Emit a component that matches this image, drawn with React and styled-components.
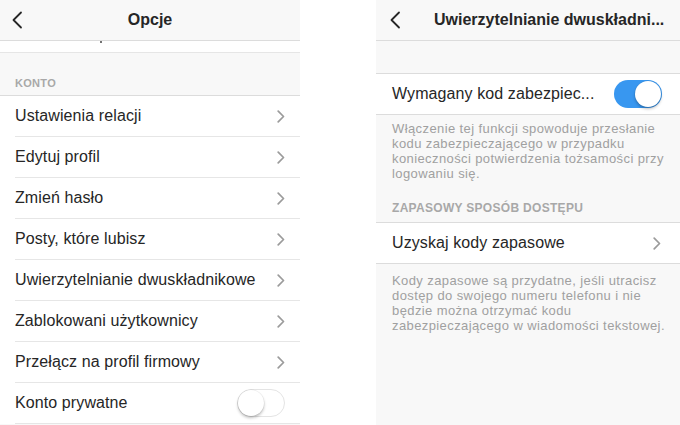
import React from "react";
import styled, { createGlobalStyle } from "styled-components";

const Global = createGlobalStyle`
  html, body { margin: 0; padding: 0; background: #fff; }
  body { font-family: "Liberation Sans", Arial, sans-serif; color: #262626; -webkit-font-smoothing: antialiased; }
`;

const Page = styled.div`
  display: flex;
  width: 680px;
  height: 425px;
  overflow: hidden;
  background: #fff;
`;

const Phone = styled.div`
  width: ${(p) => p.$w}px;
  margin-left: ${(p) => p.$ml || 0}px;
  height: 425px;
  background: #f8f8f8;
  display: flex;
  flex-direction: column;
  overflow: hidden;
`;

const Header = styled.div`
  height: 40px;
  flex: none;
  background: #f8f8f8;
  border-bottom: 1px solid #dcdcdc;
  display: flex;
  align-items: center;
  position: relative;
`;

const Back = styled.div`
  position: absolute;
  left: ${(p) => p.$l}px;
  top: 11px;
  width: 12px;
  height: 18px;
  display: flex;
`;

const Title = styled.div`
  flex: 1;
  text-align: ${(p) => (p.$left ? "left" : "center")};
  padding-left: ${(p) => p.$pl || 0}px;
  font-size: 16px;
  font-weight: 600;
  color: #262626;
  white-space: nowrap;
`;

const PartialRow = styled.div`
  height: 11px;
  flex: none;
  background: #fff;
  border-bottom: 1px solid #e6e6e6;
  position: relative;
`;

const Tick = styled.span`
  position: absolute;
  left: 100px;
  top: 0;
  width: 2px;
  height: 2px;
  background: #444;
  border-radius: 1px;
`;

const Gap = styled.div`
  height: ${(p) => p.$h}px;
  flex: none;
  background: #f8f8f8;
`;

const SectionLabel = styled.div`
  height: ${(p) => p.$h}px;
  flex: none;
  box-sizing: border-box;
  display: flex;
  align-items: flex-end;
  padding: 0 0 ${(p) => p.$pb}px ${(p) => p.$pl}px;
  font-size: ${(p) => p.$fs}px;
  font-weight: 700;
  letter-spacing: 0.3px;
  color: #a8a8a8;
  border-bottom: 1px solid #dcdcdc;
`;

const List = styled.div`
  background: #fff;
  flex: none;
  border-top: ${(p) => (p.$top ? "1px solid #dcdcdc" : "none")};
  border-bottom: ${(p) => (p.$bottom ? "1px solid #dcdcdc" : "none")};
`;

const Row = styled.div`
  height: 40px;
  display: flex;
  align-items: center;
  margin-left: ${(p) => p.$inset}px;
  padding-left: ${(p) => p.$pad}px;
  padding-right: ${(p) => p.$pr}px;
  border-bottom: ${(p) => (p.$last ? "none" : "1px solid #e6e6e6")};
`;

const Label = styled.div`
  flex: 1;
  font-size: 16px;
  color: #262626;
  white-space: nowrap;
  letter-spacing: 0.1px;
`;

const Desc = styled.div`
  flex: none;
  padding: ${(p) => p.$pt}px 8px 0 16px;
  font-size: 13px;
  line-height: 15px;
  letter-spacing: 0.4px;
  color: #a0a0a0;
`;

const DescLine = styled.span`
  display: block;
  white-space: nowrap;
`;

const Switch = styled.div`
  width: 48px;
  height: 28px;
  box-sizing: border-box;
  border-radius: 14px;
  background: ${(p) => (p.$on ? "#3897f0" : "#fff")};
  border: ${(p) => (p.$on ? "none" : "1.5px solid #e4e4e4")};
  position: relative;
  flex: none;
`;

const Knob = styled.div`
  position: absolute;
  top: ${(p) => (p.$on ? 1 : -0.5)}px;
  left: ${(p) => (p.$on ? 21 : -0.5)}px;
  width: 26px;
  height: 26px;
  border-radius: 50%;
  background: #fff;
  box-shadow: 0 2px 3px rgba(0, 0, 0, 0.25), 0 0 0 0.5px rgba(0, 0, 0, 0.08);
`;

const Chevron = () => (
  <svg width="8" height="13" viewBox="0 0 8 13">
    <path d="M1.2 1.2 L6.5 6.5 L1.2 11.8" fill="none" stroke="#9b9b9b" strokeWidth="1.7" strokeLinecap="round" strokeLinejoin="round" />
  </svg>
);

const BackIcon = () => (
  <svg width="12" height="18" viewBox="0 0 12 18">
    <path d="M10 1.5 L2.5 9 L10 16.5" fill="none" stroke="#262626" strokeWidth="1.8" strokeLinecap="round" strokeLinejoin="round" />
  </svg>
);

const accountItems = [
  "Ustawienia relacji",
  "Edytuj profil",
  "Zmień hasło",
  "Posty, które lubisz",
  "Uwierzytelnianie dwuskładnikowe",
  "Zablokowani użytkownicy",
  "Przełącz na profil firmowy",
];

const desc1 = [
  "Włączenie tej funkcji spowoduje przesłanie",
  "kodu zabezpieczającego w przypadku",
  "konieczności potwierdzenia tożsamości przy",
  "logowaniu się.",
];

const desc2 = [
  "Kody zapasowe są przydatne, jeśli utracisz",
  "dostęp do swojego numeru telefonu i nie",
  "będzie można otrzymać kodu",
  "zabezpieczającego w wiadomości tekstowej.",
];

export default function App() {
  return (
    <>
      <Global />
      <Page>
        <Phone $w={300}>
          <Header>
            <Back $l={11}>
              <BackIcon />
            </Back>
            <Title>Opcje</Title>
          </Header>
          <PartialRow>
            <Tick />
          </PartialRow>
          <SectionLabel $h={43} $pb={6} $pl={15} $fs={11}>
            KONTO
          </SectionLabel>
          <List>
            {accountItems.map((t) => (
              <Row key={t} $inset={15} $pad={0} $pr={15}>
                <Label>{t}</Label>
                <Chevron />
              </Row>
            ))}
            <Row $inset={15} $pad={0} $pr={15}>
              <Label>Konto prywatne</Label>
              <Switch>
                <Knob />
              </Switch>
            </Row>
          </List>
        </Phone>

        <Phone $w={304} $ml={76}>
          <Header>
            <Back $l={13}>
              <BackIcon />
            </Back>
            <Title $left $pl={58}>
              Uwierzytelnianie dwuskładni...
            </Title>
          </Header>
          <Gap $h={32} />
          <List $top $bottom>
            <Row $inset={0} $pad={16} $pr={18} $last>
              <Label>Wymagany kod zabezpiec...</Label>
              <Switch $on>
                <Knob $on />
              </Switch>
            </Row>
          </List>
          <Desc $pt={6}>
            {desc1.map((l) => (
              <DescLine key={l}>{l}</DescLine>
            ))}
          </Desc>
          <SectionLabel $h={42} $pb={7} $pl={16} $fs={12}>
            ZAPASOWY SPOSÓB DOSTĘPU
          </SectionLabel>
          <List $bottom>
            <Row $inset={0} $pad={16} $pr={19} $last>
              <Label>Uzyskaj kody zapasowe</Label>
              <Chevron />
            </Row>
          </List>
          <Desc $pt={9}>
            {desc2.map((l) => (
              <DescLine key={l}>{l}</DescLine>
            ))}
          </Desc>
        </Phone>
      </Page>
    </>
  );
}
